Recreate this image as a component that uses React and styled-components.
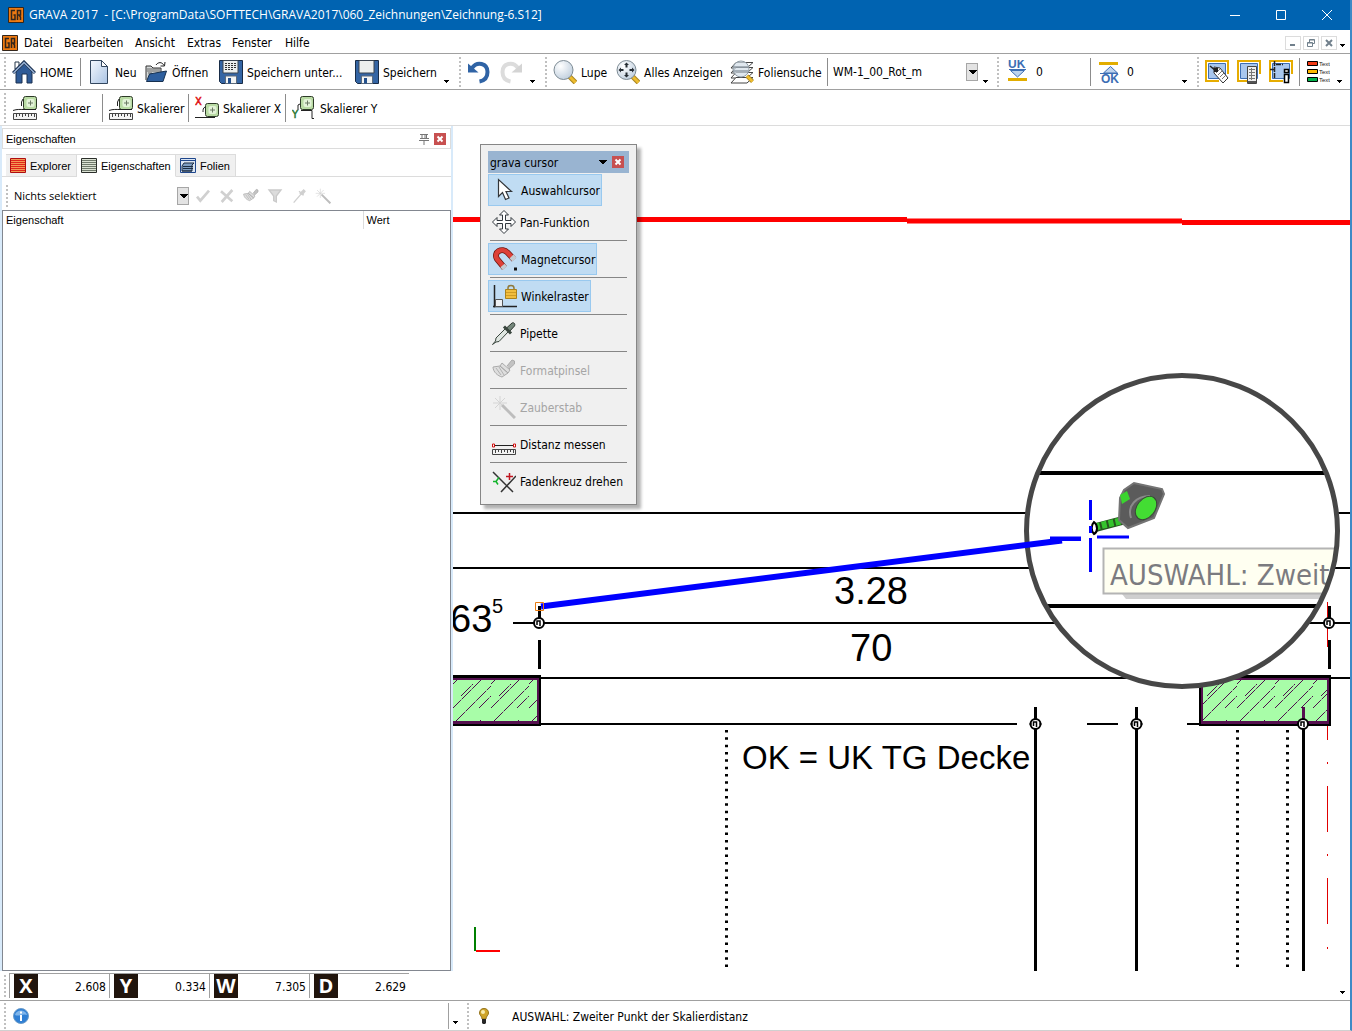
import React, { useState } from "react";
import styled, { createGlobalStyle, css } from "styled-components";

const GlobalStyle = createGlobalStyle`
  * {
    box-sizing: border-box;
  }
  html, body, #root {
    height: 100%;
  }
  body {
    margin: 0;
    background: #fff;
    color: #000;
    font-family: "DejaVu Sans Condensed", "DejaVu Sans", sans-serif;
    font-size: 12px;
    line-height: 16px;
  }
  button, input, select {
    margin: 0;
    padding: 0;
    border: none;
    border-radius: 0;
    background: none;
    color: inherit;
    font: inherit;
  }
  svg {
    display: block;
    flex: none;
  }
`;

const Shell = styled.div`
  display: flex;
  flex-direction: column;
  min-height: 100vh;
  border-right: 2px solid #3d8ac6;
  border-bottom: 1px solid #d0d0d0;
  overflow: hidden;
`;

const TitleBar = styled.header`
  display: flex;
  align-items: center;
  height: 30px;
  padding: 0 1px 0 8px;
  margin-right: -1px;
  background: #0063b1;
  color: #fff;
`;

const Title = styled.h1`
  flex: 1;
  margin: 0 0 0 5px;
  font-family: "Open Sans", "Noto Sans", sans-serif;
  font-size: 12px;
  font-weight: 400;
  white-space: pre;
`;

const CaptionButton = styled.button`
  display: flex;
  align-items: center;
  justify-content: center;
  width: 46px;
  height: 30px;
`;

const MenuBar = styled.nav`
  display: flex;
  align-items: center;
  height: 24px;
  padding: 2px 5px 0 2px;
  border-bottom: 1px solid #a0a0a0;
`;

const MenuItem = styled.button`
  width: ${(p) => p.$w}px;
  padding-left: 6px;
  text-align: left;
  white-space: nowrap;
`;

const MdiButtons = styled.div`
  display: flex;
  align-items: center;
  gap: 2px;
  margin-left: auto;
`;

const MdiButton = styled.button`
  display: flex;
  align-items: center;
  justify-content: center;
  width: 16px;
  height: 14px;
  border: 1px solid #dcdcdc;
`;

const ToolBar = styled.div`
  display: flex;
  align-items: center;
  height: 36px;
  padding-left: 4px;
  border-bottom: 1px solid ${(p) => p.$line || "#a0a0a0"};
`;

const Grip = styled.span`
  flex: none;
  width: 2px;
  height: ${(p) => p.$h || 30}px;
  margin-right: ${(p) => p.$gap || 6}px;
  background: repeating-linear-gradient(#c0c0c0 0 2px, transparent 2px 4px);
`;

const Separator = styled.span`
  flex: none;
  width: 1px;
  height: 28px;
  margin-right: ${(p) => p.$gap || 6}px;
  background: #8c8c8c;
`;

const Spacer = styled.span`
  flex: ${(p) => (p.$w ? `0 0 ${p.$w}px` : 1)};
`;

const ToolButton = styled.button`
  display: flex;
  flex: none;
  align-items: center;
  gap: ${(p) => p.$gap || 4}px;
  width: ${(p) => p.$w}px;
  height: 30px;
  white-space: nowrap;
`;

const Caption = styled.span`
  padding-top: 2px;
`;

const MoreButton = styled.button`
  display: flex;
  flex: none;
  align-items: flex-end;
  justify-content: center;
  width: ${(p) => p.$w || 10}px;
  height: ${(p) => p.$h || 24}px;
`;

const Combo = styled.label`
  display: flex;
  flex: none;
  align-items: center;
  width: ${(p) => p.$w}px;
`;

const Select = styled.select`
  flex: 1;
  min-width: 0;
  appearance: none;
  outline: none;
  font-family: ${(p) => p.$font || "inherit"};
`;

const ComboArrow = styled.span`
  display: flex;
  align-items: center;
  justify-content: center;
  width: 12px;
  height: 18px;
  border: 1px solid #a6a6a6;
  background: #e3e3e3;
`;

const NumberField = styled.label`
  display: flex;
  flex: none;
  align-items: center;
  gap: 8px;
  width: ${(p) => p.$w}px;
`;

const NumberInput = styled.input`
  width: 40px;
  outline: none;
`;

const Main = styled.main`
  display: flex;
  flex: 1;
  min-height: 0;
`;

const Dock = styled.aside`
  display: flex;
  flex: none;
  flex-direction: column;
  width: 453px;
  padding: 2px 0 0;
  border: solid #d8eafa;
  border-width: 0 2px;
  font-family: "Liberation Sans", Arial, sans-serif;
  font-size: 11px;
`;

const DockHeader = styled.div`
  display: flex;
  align-items: center;
  height: 21px;
  padding: 0 4px 0 3px;
  border: 1px solid #dcdcdc;
`;

const DockTitle = styled.h2`
  flex: 1;
  margin: 0;
  font-size: 11px;
  font-weight: 400;
`;

const CloseButton = styled.button`
  display: flex;
  align-items: center;
  justify-content: center;
  width: 12px;
  height: 12px;
  margin-left: ${(p) => p.$gap}px;
  background: #c75050;
`;

const Tabs = styled.div`
  display: flex;
  height: 23px;
  margin-top: 5px;
  padding-left: 4px;
  box-shadow: inset 0 -1px #dcdcdc;
`;

const Tab = styled.button`
  display: flex;
  align-items: center;
  gap: 4px;
  width: ${(p) => p.$w}px;
  padding-left: 4px;
  border: 1px solid #dcdcdc;
  border-left-width: 0;
  background: ${(p) => (p.$active ? "#fff" : "#f0f0f0")};
  ${(p) => p.$active && css`border-bottom-color: #fff;`}
`;

const SelectionBar = styled.div`
  display: flex;
  align-items: center;
  height: 33px;
  padding: 5px 0 0 4px;
`;

const TinyButton = styled.button`
  display: flex;
  justify-content: center;
  width: 24px;
  height: 16px;
`;

const PropertyBox = styled.div`
  flex: 1;
  border: 1px solid #828790;
`;

const PropertyTable = styled.table`
  width: 100%;
  border-collapse: collapse;
  table-layout: fixed;
  th {
    height: 18px;
    padding: 0 3px;
    font-weight: 400;
    text-align: left;
  }
  th + th {
    width: 87px;
    border-left: 1px solid #dcdcdc;
  }
`;

const Canvas = styled.section`
  position: relative;
  flex: 1;
  min-width: 0;
  overflow: hidden;
`;

// the sheet lies behind the floating palettes
const Sheet = styled.svg`
  position: absolute;
  inset: 0;
  width: 100%;
  height: 100%;
`;

const DimText = styled.text`
  font-family: "Liberation Sans", Arial, sans-serif;
  font-size: ${(p) => p.$size}px;
`;

const TipText = styled.text`
  font-size: 29px;
  fill: #7b7b80;
`;

const Palette = styled.div`
  position: absolute;
  top: 18px;
  left: 27px;
  width: 157px;
  padding: 6px 7px 5px;
  border: 1px solid #868686;
  background: #f0f0f0;
  box-shadow: 4px 4px 3px rgba(0, 0, 0, 0.3);
`;

const PaletteHeader = styled.div`
  display: flex;
  align-items: center;
  height: 22px;
  margin-bottom: 1px;
  padding: 0 5px 0 2px;
  background: #99b4d1;
`;

const PaletteTitle = styled.h2`
  flex: 1;
  margin: 0;
  padding-top: 2px;
  font-size: 12px;
  font-weight: 400;
`;

const PaletteGroup = styled.div`
  padding: 2px 0;
  border-bottom: 1px solid #868686;
  margin: 0 2px;
  &:first-of-type {
    padding-top: 0;
  }
  &:last-child {
    border-bottom: none;
  }
`;

const PaletteItem = styled.button`
  display: flex;
  align-items: center;
  gap: 4px;
  height: 32px;
  margin-left: -2px;
  padding: 0 1px 0 3px;
  border: 1px solid transparent;
  white-space: nowrap;
  &:disabled {
    color: #a5a5a5;
  }
  ${(p) =>
    p.$active &&
    css`
      padding-left: 4px;
      border-color: #99c9ef;
      background: #c0dcf3;
    `}
`;

const CoordBar = styled.div`
  display: flex;
  align-items: center;
  height: 30px;
  padding-left: 4px;
  border-bottom: 1px solid #a0a0a0;
`;

const Coord = styled.label`
  display: flex;
  align-items: center;
  width: 100px;
  height: 25px;
  padding: 0 3px 0 4px;
  border: solid #a0a0a0;
  border-width: 1px 0 0 1px;
`;

const CoordName = styled.span`
  width: 24px;
  height: 24px;
  background: #21150d;
  color: #fff;
  font-family: "Open Sans", sans-serif;
  font-size: 20px;
  font-weight: 700;
  line-height: 24px;
  text-align: center;
`;

const CoordInput = styled.input`
  flex: 1;
  min-width: 0;
  padding-top: 2px;
  outline: none;
  text-align: right;
`;

const StatusBar = styled.footer`
  display: flex;
  align-items: center;
  height: 29px;
  padding-left: 4px;
`;

const StatusField = styled.div`
  width: 439px;
  height: 26px;
  padding: 5px 3px;
  border-right: 1px solid #a0a0a0;
`;

const StatusText = styled.p`
  margin: 0 0 0 22px;
  padding-top: 2px;
`;

const Arrow = ({ size = 5 }) => (
  <svg width={size + 2} height={4} shapeRendering="crispEdges">
    <path d={size > 5 ? "M0 0h9L4.500 4.500z" : "M1 0h5v1h-1v1h-1v1h-1v-1h-1v-1h-1z"} />
  </svg>
);

const Icon = ({ children, w = 24, h = 24 }) => (
  <svg width={w} height={h} viewBox={`0 0 ${w} ${h}`} fill="none" aria-hidden="true">
    {children}
  </svg>
);

const LogoIcon = () => (
  <Icon w={16} h={16}>
    <path d="M.5.5h15v15H.5z" fill="#ee7a11" stroke="#33261c" />
    <path d="M7 3.500H3.500v9H7V8H5.500M9.500 13V3.500h3V8h-3M11 8l1.500 2v3" stroke="#33261c" strokeWidth="1.500" />
  </Icon>
);

const HomeIcon = () => (
  <Icon>
    <path d="M3 2h4v7H3z" fill="#fff" stroke="#26384a" />
    <path d="M4 12 12.500 4 20 12v11h-5v-9h-5v9H4z" fill="#2e5a96" stroke="#1b3050" />
    <path d="M1 13 12 2l11 11" stroke="#1b3050" strokeWidth="3" />
    <path d="M1.500 13 12 2.500l10.500 10.500" stroke="#9db8dc" strokeWidth="1.300" />
  </Icon>
);

const NewIcon = () => (
  <Icon>
    <defs>
      <linearGradient id="paper" x1="0" y1="0" x2="1" y2="1">
        <stop offset="0" stopColor="#f4f8fd" />
        <stop offset="1" stopColor="#a9c3e4" />
      </linearGradient>
    </defs>
    <path d="M3.500.5h11l6 6v17h-17z" fill="url(#paper)" stroke="#33475f" />
    <path d="M14.500.5v6h6z" fill="#fff" stroke="#33475f" />
  </Icon>
);

const OpenIcon = () => (
  <Icon>
    <path d="M2 20V6h5l2 2h8v5" fill="#d5d9d9" stroke="#333" />
    <path d="M3 9h13M3 11h13M4 13h4" stroke="#666" />
    <path d="M2.500 21.500 5.500 14l17-3-3.500 10.500z" fill="#2e5f9e" stroke="#16304f" />
    <path d="M12 5c2-3 6-3.500 8 .5M21 2l-.5 4h-4" stroke="#222" />
  </Icon>
);

const SaveIcon = ({ lines }) => (
  <Icon>
    <path d="M.5.5h23v23H2.500l-2-2z" fill="#3465a4" stroke="#182c47" />
    <path d="M4 .5h15V13H4z" fill="#ecefee" stroke="#3a4450" />
    {lines && <path d="M6 3.500h11M6 5.500h11M6 7.500h11M6 9.500h9" stroke="#333" strokeDasharray="2 1" />}
    <path d="M6.500 16h11v7.500h-11z" fill="#f2f4f4" stroke="#5c6b7c" />
    <path d="M9 18h3v5.500H9z" fill="#24508c" />
  </Icon>
);

const UndoIcon = ({ faded }) => (
  <Icon>
    <g transform={faded ? "translate(24 0) scale(-1 1)" : undefined}>
      <path d="M5 8C10 1 20.500 3 20.500 12c0 5-2.500 8.500-8 9.500" stroke={faded ? "#dcdcdc" : "#2f63a5"} strokeWidth="4" />
      <path d="M1 3.500v9h10.500z" fill={faded ? "#d4d4d4" : "#2f63a5"} />
    </g>
  </Icon>
);

const LensIcon = ({ arrows }) => (
  <Icon>
    <defs>
      <radialGradient id="lens" cx=".35" cy=".3" r=".8">
        <stop offset="0" stopColor="#fff" />
        <stop offset="1" stopColor="#bcccdc" />
      </radialGradient>
    </defs>
    <path d="m16 16 6.500 6.500" stroke="#a88420" strokeWidth="5" />
    <path d="m16 16 6.500 6.500" stroke="#edbc2f" strokeWidth="3" />
    <circle cx="10.500" cy="10" r="9.500" fill="url(#lens)" stroke="#7d8b94" />
    {arrows && (
      <path
        d="M10.500 2.500 8 5h5zM10.500 17.500 8 15h5zM2.500 10 5 7.500v5zM18.500 10 16 7.500v5zM9.500 5h2v2.500h-2zM9.500 12.500h2V15h-2zM5 9h2.500v2H5zM13.500 9H16v2h-2.500z"
        fill="#252c33"
      />
    )}
  </Icon>
);

const LayerSearchIcon = () => (
  <Icon>
    {[0, 5, 10, 15].map((y) => (
      <path key={y} d={`M6 ${y + 2.500}h17l-6 5.500H1z`} fill="#fff" stroke="#444" />
    ))}
    <circle cx="11" cy="9" r="8" fill="#d3dee8" fillOpacity=".7" stroke="#8e9aa3" />
    <path d="M4 7h14M4 11h14" stroke="#6b7681" />
    <path d="m17 16 5.500 5.500" stroke="#a88420" strokeWidth="4" />
    <path d="m17 16 5.500 5.500" stroke="#edbc2f" strokeWidth="2.500" />
  </Icon>
);

const LevelText = styled.text`
  font: 700 12px "Liberation Sans", sans-serif;
  fill: #3d6eb4;
`;

const LowerEdgeIcon = () => (
  <Icon w={20} h={24}>
    <LevelText x="0" y="8">UK</LevelText>
    <path d="M1 9.500h17M2.500 10.500l7 6.500 7-6.500z" fill="#bdd3ee" stroke="#3d6eb4" />
    <path d="M0 18h19v3H0z" fill="#e2ad00" />
  </Icon>
);

const UpperEdgeIcon = () => (
  <Icon w={20} h={24}>
    <path d="M0 2h19v3H0z" fill="#e2ad00" />
    <path d="M1 13.500h18M4.500 13l7-6.500 7 6.500z" fill="#bdd3ee" stroke="#3d6eb4" />
    <LevelText x="2" y="23">OK</LevelText>
  </Icon>
);

const Frame = () => (
  <>
    <path d="M14 21H1V1h22v13" stroke="#e6ac00" strokeWidth="2" />
    <path d="M3.500 3.500h17v15h-17z" fill="#a9c7ee" stroke="#3d6eb4" />
  </>
);

const LabelIcon = () => (
  <Icon>
    <Frame />
    <path d="m9 7 6 1 8 10-5 5-9-10z" fill="#fff" stroke="#333" />
    <path d="m11 13 4-4m-2 6 4-4m-2 6 4-4m-2 6 4-4" stroke="#777" />
    <path d="m5 6 6 5" stroke="#222" strokeWidth="1.500" />
    <path d="M9 8h4v4H9z" fill="#222" />
  </Icon>
);

const ListIcon = () => (
  <Icon>
    <Frame />
    <path d="M10.500 6.500h9v17h-9z" fill="#eee" stroke="#444" />
    <path d="M12 9.500h6M12 12.500h6M12 15.500h6M12 18.500h6M14.500 8v12" stroke="#777" />
    <path d="M11 21h8v2h-8z" fill="#555" />
  </Icon>
);

const InfoFrameIcon = () => (
  <Icon>
    <Frame />
    <path d="M5.500 1v18M1 9.500h6M7 4.500h7" stroke="#222" strokeWidth="1.500" strokeDasharray="5 1" />
    <path d="M15.500 9.500h4v3h-4zM15.500 14.500h4v8h-4z" fill="#fff" stroke="#000" strokeWidth="1.500" />
  </Icon>
);

const LegendText = styled.text`
  font: 6px "Liberation Sans", sans-serif;
  fill: #222;
`;

const LegendIcon = () => (
  <Icon>
    {["#f23a14", "#ffb800", "#00b14a"].map((c, i) => (
      <g key={c}>
        <path d={`M1.500 ${i * 8 + 1.500}h10v4h-10z`} fill={c} stroke="#000" />
        <LegendText x="13" y={i * 8 + 6}>Text</LegendText>
      </g>
    ))}
  </Icon>
);

const Tape = () => (
  <>
    <rect x=".500" y=".500" width="13" height="13" rx="2" fill="#b9dba4" stroke="#2d3a28" />
    <rect x="3.500" y="3" width="8" height="8" rx="2" fill="#e3f3d8" />
    <path d="M7.500 4.500v5M5 7h5" stroke="#6d7b66" />
  </>
);

const Ruler = () => (
  <>
    <path d="M.5 17.500h23v6H.5z" fill="#f3f3f3" stroke="#444" />
    <path d="M3.500 18v3M6.500 18v2M9.500 18v3M12.500 18v2M15.500 18v3M18.500 18v2M21.500 18v3" stroke="#444" />
  </>
);

const ScaleIcon = () => (
  <Icon>
    <g transform="translate(10 0)"><Tape /></g>
    <path d="M10 3 8.500 6v4M0 14.500c4-1.500 8-1 10-1h13" stroke="#222" />
    <Ruler />
  </Icon>
);

const AxisText = styled.text`
  font: 11px "DejaVu Sans Condensed", sans-serif;
  fill: ${(p) => p.$color};
  stroke: ${(p) => p.$color};
  stroke-width: 0.5px;
`;

const ScaleXIcon = () => (
  <Icon>
    <AxisText $color="#e01515" x="0" y="9">X</AxisText>
    <g transform="translate(10 7)"><Tape /></g>
    <path d="M0 21.500h20M10 11c-2 1-2 3-2 5" stroke="#222" />
  </Icon>
);

const ScaleYIcon = () => (
  <Icon>
    <AxisText $color="#2c7a35" x="0" y="22">Y</AxisText>
    <g transform="translate(8 0)"><Tape /></g>
    <path d="M8 8 6 9v5M9 14.500h11v8h2" stroke="#222" />
  </Icon>
);

const PinIcon = () => (
  <Icon w={12} h={12}>
    <path d="M2 1.500h8M4 1.500v4M8.500 1.500v4M7 2v4M2 5.500h9M1 7.500h10M6 8v4" stroke="#777" />
  </Icon>
);

const CrossIcon = () => (
  <Icon w={12} h={12}>
    <path d="m3.500 3.500 5 5m0-5-5 5" stroke="#fff" strokeWidth="2" />
  </Icon>
);

const SheetIcon = ({ edge, fill, stripe }) => (
  <Icon w={16} h={16}>
    <path d="M.5.5h15v14H.5z" fill={fill} stroke={edge} />
    <path d="M1 2.500h14M1 4.500h14M1 6.500h14M1 8.500h14M1 10.500h14M1 12.500h14" stroke={stripe} />
  </Icon>
);

const LayersIcon = () => (
  <Icon w={16} h={16}>
    <path d="M.5.5h15v14H.5z" fill="#dbe6f4" stroke="#1f478c" />
    <path d="M1 2.500h14" stroke="#1f478c" />
    <path d="M4 5h10l-2 2v6H2V8z" fill="#7f9fc4" stroke="#1c2d42" />
    <path d="M3 8.500h10M3 10.500h10M2 13h10" stroke="#1c2d42" />
  </Icon>
);

const BrushShape = () => (
  <>
    <path d="m15 8 5-6 2.500 1v3L17 11" fill="#c2c2c2" stroke="#aaa" />
    <path d="m10 5 8 7-2 3-8-7zM8 8 1 9c0 5 5 9 9 10l6-4z" fill="#dedede" stroke="#aaa" />
    <path d="m4 10 5 7m-2-8 5 8" stroke="#b2b2b2" />
  </>
);

const WandShape = () => (
  <>
    <path d="M8 1v14M1 8h14M3 3l10 10M13 3 3 13" stroke="#d4d4d4" />
    <path d="m10 10 13 13" stroke="#bdbdbd" strokeWidth="3" />
  </>
);

const PipetteShape = () => (
  <>
    <path d="M13 8 4 17l-.5 3-3 3.500L4 21l3-.5L16 11" fill="#dfe6e1" stroke="#39453d" />
    <path d="M14 7.500 20 2c2-1 3.500 1 2.500 3L17 11" fill="#75877b" stroke="#2b352e" />
    <path d="m12 5.500 7 7" stroke="#39453d" strokeWidth="3" />
  </>
);

const SmallIcon = ({ children }) => (
  <svg width="16" height="16" viewBox="0 0 24 24" fill="none" aria-hidden="true">
    {children}
  </svg>
);

const MagnetIcon = () => (
  <Icon>
    <path d="M21 12.500 14.500 5.500C9 0 0 5 4 12l7.500 9" stroke="#6e1812" strokeWidth="6" />
    <path d="M21 12.500 14.500 5.500C9 0 0 5 4 12l7.500 9" stroke="#dd4038" strokeWidth="4.500" />
    <path d="m18.500 9.500 3 3.200M9.500 18.500l2.300 2.800" stroke="#c3cbd1" strokeWidth="5.500" />
    <path d="M21 20.500h3v3h-3z" fill="#111" />
  </Icon>
);

const AngleIcon = () => (
  <Icon>
    <path d="M1.500 1v22.500M0 22.500h24" stroke="#222" strokeWidth="1.500" />
    <path d="M2.500 15.500h7v7h-7z" fill="#eef1f4" stroke="#555" />
    <path d="M15 7V4c0-3.500 6-3.500 6 0v3" stroke="#8f7a3d" strokeWidth="1.500" />
    <path d="M12.500 5.500h11v9h-11z" fill="#f0bd3e" stroke="#a9811c" />
    <path d="M13 8.500h10M13 11.500h10" stroke="#cf9c25" />
  </Icon>
);

const PointerIcon = () => (
  <Icon>
    <path d="M5.500 1.500v17l4-4 3 7 3.500-1.500-3-6.500h5.500z" fill="#fff" stroke="#33363a" strokeWidth="1.200" />
  </Icon>
);

const PanIcon = () => (
  <Icon>
    <path
      d="m12 .5 4.500 4.500h-3v5.500H19v-3l4.500 4.500-4.500 4.500v-3h-5.500V19h3L12 23.500 7.500 19h3v-5.500H5v3L.5 12 5 7.500v3h5.500V5h-3z"
      fill="#fff"
      stroke="#32383f"
    />
  </Icon>
);

const DistanceIcon = () => (
  <Icon>
    <path d="M2 13.500h20" stroke="#222" />
    <path d="M.5 12h2v3h-2zM21.500 12h2v3h-2z" fill="#fff" stroke="#d01010" />
    <path d="M.5 17.500h23v5H.5z" fill="#f3f3f3" stroke="#444" />
    <path d="M3.500 18v3M6.500 18v2M9.500 18v3M12.500 18v2M15.500 18v3M18.500 18v2M21.500 18v3" stroke="#444" />
  </Icon>
);

const CrosshairIcon = () => (
  <Icon>
    <path d="m1 3 20 20M24 7 9 23" stroke="#333" strokeWidth="1.500" />
    <path d="M17.500 4v7M14 7.500h7" stroke="#c01520" strokeWidth="1.500" />
    <path d="M1 12.500h3l3-4M4 12.500l2 3" stroke="#13b42c" strokeWidth="1.500" />
  </Icon>
);

const InfoIcon = () => (
  <Icon w={16} h={16}>
    <circle cx="8" cy="8" r="7.500" fill="#2f7fd4" stroke="#6c9cc9" />
    <path d="M2 7c1-6 11-6 12 0-4-2-8 2-12 0z" fill="#7fb5ea" />
    <path d="M7 3.500h2v2H7zM7 7h2v6H7z" fill="#fff" />
  </Icon>
);

const BulbIcon = () => (
  <Icon w={12} h={18}>
    <path d="M6 1.500C3 1.500 1.500 3.500 1.500 6S4 9 4 12h4c0-3 2.500-3.500 2.500-6S9 1.500 6 1.500z" fill="#cfa52b" stroke="#94731a" />
    <circle cx="5" cy="5" r="2" fill="#f8ecb0" />
    <path d="M4 12h4v4l-1 1H5l-1-1z" fill="#262626" />
  </Icon>
);

const paletteGroups = [
  [
    { label: "Auswahlcursor", icon: <PointerIcon />, active: true },
    { label: "Pan-Funktion", icon: <PanIcon /> },
  ],
  [{ label: "Magnetcursor", icon: <MagnetIcon />, active: true }],
  [{ label: "Winkelraster", icon: <AngleIcon />, active: true }],
  [{ label: "Pipette", icon: <Icon><PipetteShape /></Icon> }],
  [{ label: "Formatpinsel", icon: <Icon><BrushShape /></Icon>, disabled: true }],
  [{ label: "Zauberstab", icon: <Icon><WandShape /></Icon>, disabled: true }],
  [{ label: "Distanz messen", icon: <DistanceIcon /> }],
  [{ label: "Fadenkreuz drehen", icon: <CrosshairIcon /> }],
];

const coords = [
  ["X", "2.608"],
  ["Y", "0.334"],
  ["W", "7.305"],
  ["D", "2.629"],
];

const Node = ({ x, y }) => (
  <g>
    <circle cx={x} cy={y} r="5" fill="#fff" stroke="#000" strokeWidth="2" />
    <path d={`M${x - 2} ${y + 2}v-4h3v5M${x - 6} ${y}h2M${x + 4} ${y}h2`} stroke="#000" strokeWidth="1.500" fill="none" />
  </g>
);

const Wall = ({ x, width, id, open }) => (
  <g>
    <defs>
      <pattern id={id} width="38" height="40" patternUnits="userSpaceOnUse" x={x} y="680">
        <path
          d="M-2 30 28 0M2 42 38 6M8 16 20 4M26 28l12-12M-12 16 4 0"
          stroke="#4d0a4d"
          strokeDasharray="14 1"
          fill="none"
        />
      </pattern>
    </defs>
    <path d={`M${x} 675h${width}v51h-${width}z`} fill="#000" />
    <path d={`M${open ? x : x + 2} 678h${open ? width - 2 : width - 4}v46h-${open ? width - 2 : width - 4}z`} fill="#55104f" />
    <path d={`M${open ? x : x + 4} 680h${open ? width - 4 : width - 8}v41h-${open ? width - 4 : width - 8}z`} fill="#a8fda8" />
    <path d={`M${open ? x : x + 4} 680h${open ? width - 4 : width - 8}v41h-${open ? width - 4 : width - 8}z`} fill={`url(#${id})`} />
  </g>
);

// sheet coordinates start at 453,126
const Drawing = () => (
  <Sheet role="img" aria-label="Zeichnung-6.S12" fill="none">
    <defs>
      <clipPath id="loupe">
        <circle cx="1182" cy="531" r="155" />
      </clipPath>
    </defs>
    <g transform="translate(-453 -126)">
      <path d="M453 219.500h454M907 221h275M1182 222.500h400" stroke="#f00" strokeWidth="5" />
      <path d="M453 513h1200M453 568h1200M513 623h1100M541 678h1100M541 724h476M1087 724h31M1187 724h16" stroke="#000" strokeWidth="2" />
      <DimText x="450" y="632" $size={38} fill="#000">63</DimText>
      <DimText x="492" y="613" $size={20} fill="#000">5</DimText>
      <DimText x="834" y="604" $size={38} fill="#000">3.28</DimText>
      <DimText x="850" y="661" $size={38} fill="#000">70</DimText>
      <DimText x="742" y="769" $size={33} fill="#000">OK = UK TG Decke</DimText>

      <Wall id="hatchLeft" x={453} width={88} open />
      <Wall id="hatchRight" x={1199} width={132} />

      <path d="M539.500 606v12M539.500 640v29M1329.500 606v12M1329.500 640v29" stroke="#000" strokeWidth="3" />
      <path d="M1035.500 707v264M1136.500 707v264M1303.500 724v247" stroke="#000" strokeWidth="3" />
      <path d="M1303.500 707v17" stroke="#55104f" strokeWidth="3" />
      <path d="M726.500 730v240M1237.500 730v240M1287.500 730v240" stroke="#000" strokeWidth="3" strokeDasharray="2.500 4.830" />
      <path d="M1327.500 602v45M1327.500 726v14M1327.500 762v2M1327.500 786v46M1327.500 854v2M1327.500 878v46M1327.500 947v2" stroke="#e00000" />
      <Node x={539} y={623} />
      <Node x={1329} y={623} />
      <Node x={1035.5} y={724} />
      <Node x={1136.5} y={724} />
      <Node x={1303} y={724} />
      <path d="M475 927v24" stroke="#008000" strokeWidth="2" />
      <path d="M476 951h24" stroke="#f00" strokeWidth="2" />

      <circle cx="1182" cy="531" r="155" fill="#fff" />
      <g clipPath="url(#loupe)">
        <path d="M1020 473h330M1020 606h330" stroke="#000" strokeWidth="4" />
        <path d="M1122 594h230v5h-226z" fill="#cfcfcf" />
        <path d="M1103.500 548.500h250v45h-250z" fill="#fffff1" stroke="#b4b4b4" strokeWidth="2" />
        <TipText x="1110" y="585">AUSWAHL: Zweite</TipText>
        <path d="m1094 528 34-9" stroke="#27551f" strokeWidth="9" />
        <path d="m1095 527 30-7" stroke="#35c42d" strokeWidth="7" strokeDasharray="5 2" />
        <path d="m1120 498 4-8 10-7 28 6 2 5-10 24-26 10-9-8z" fill="#5b5b5b" stroke="#747474" strokeWidth="2" />
        <path d="m1120 495 7-4 3 8-8 5z" fill="#3bd52f" />
        <path d="M1131 518c-4-12 5-22 19-22" stroke="#8a8a8a" strokeWidth="2" />
        <ellipse cx="1146" cy="508" rx="9" ry="13" transform="rotate(38 1146 508)" fill="#43dd33" stroke="#3a4a38" />
        <path d="M1094 522c-3 3-3 9 0 12 4-2 4-9 0-12z" fill="#fff" stroke="#000" strokeWidth="2" />
      </g>
      <circle cx="1182" cy="531" r="155.500" stroke="#474747" strokeWidth="5" />
      <path d="m541 606.500 521-66" stroke="#00f" strokeWidth="6" />
      <path d="M535.500 602.500h8v8h-8z" stroke="#e87a10" />
      <path d="M1050 538h31M1097 537h32M1090.500 500v20M1090.500 526v7M1090.500 538v34" stroke="#00f" strokeWidth="3" />
      <path d="M1060 539h21" stroke="#00f" strokeWidth="4" />
    </g>
  </Sheet>
);

const App = () => {
  const [layer, setLayer] = useState("WM-1_00_Rot_m");
  const [tab, setTab] = useState("Eigenschaften");

  return (
    <>
      <GlobalStyle />
      <Shell>
        <TitleBar>
          <LogoIcon />
          <Title>{"GRAVA 2017  - [C:\\ProgramData\\SOFTTECH\\GRAVA2017\\060_Zeichnungen\\Zeichnung-6.S12]"}</Title>
          <CaptionButton aria-label="Minimieren">
            <Icon w={12} h={12}><path d="M1 6.500h10" stroke="#fff" /></Icon>
          </CaptionButton>
          <CaptionButton aria-label="Maximieren">
            <Icon w={12} h={12}><path d="M1.500 1.500h9v9h-9z" stroke="#fff" /></Icon>
          </CaptionButton>
          <CaptionButton aria-label="Schließen">
            <Icon w={12} h={12}><path d="m1 1 10 10m0-10L1 11" stroke="#fff" /></Icon>
          </CaptionButton>
        </TitleBar>

        <MenuBar>
          <LogoIcon />
          <MenuItem $w={40}>Datei</MenuItem>
          <MenuItem $w={71}>Bearbeiten</MenuItem>
          <MenuItem $w={52}>Ansicht</MenuItem>
          <MenuItem $w={45}>Extras</MenuItem>
          <MenuItem $w={53}>Fenster</MenuItem>
          <MenuItem $w={40}>Hilfe</MenuItem>
          <MdiButtons>
            <MdiButton aria-label="Fenster minimieren">
              <Icon w={8} h={8}><path d="M1 6h5" stroke="#71808c" strokeWidth="2" /></Icon>
            </MdiButton>
            <MdiButton aria-label="Fenster wiederherstellen">
              <Icon w={8} h={8}><path d="M2.500 3V.5h5v4H6M.5 3.500h5v4h-5zM.5 4h5M2.500 1h5" stroke="#71808c" /></Icon>
            </MdiButton>
            <MdiButton aria-label="Fenster schließen">
              <Icon w={8} h={8}><path d="m1 1 6 6m0-6L1 7" stroke="#71808c" strokeWidth="2" /></Icon>
            </MdiButton>
            <MoreButton $w={6} $h={10} aria-label="Mehr"><Arrow /></MoreButton>
          </MdiButtons>
        </MenuBar>

        <ToolBar>
          <Grip />
          <ToolButton $w={68}><HomeIcon /><Caption>HOME</Caption></ToolButton>
          <Separator />
          <ToolButton $w={57}><NewIcon /><Caption>Neu</Caption></ToolButton>
          <ToolButton $w={75}><OpenIcon /><Caption>Öffnen</Caption></ToolButton>
          <ToolButton $w={136}><SaveIcon lines /><Caption>Speichern unter...</Caption></ToolButton>
          <ToolButton $w={86}><SaveIcon /><Caption>Speichern</Caption></ToolButton>
          <MoreButton aria-label="Mehr"><Arrow /></MoreButton>
          <Spacer $w={8} />
          <Grip />
          <ToolButton $w={32} aria-label="Rückgängig"><UndoIcon /></ToolButton>
          <ToolButton $w={28} aria-label="Wiederholen"><UndoIcon faded /></ToolButton>
          <MoreButton aria-label="Mehr"><Arrow /></MoreButton>
          <Spacer $w={8} />
          <Grip />
          <ToolButton $w={63}><LensIcon /><Caption>Lupe</Caption></ToolButton>
          <ToolButton $w={114}><LensIcon arrows /><Caption>Alles Anzeigen</Caption></ToolButton>
          <ToolButton $w={97}><LayerSearchIcon /><Caption>Foliensuche</Caption></ToolButton>
          <Separator $gap={5} />
          <Combo $w={145}>
            <Select aria-label="Folie" value={layer} onChange={(e) => setLayer(e.target.value)}>
              <option>WM-1_00_Rot_m</option>
            </Select>
            <ComboArrow><Arrow size={7} /></ComboArrow>
          </Combo>
          <Spacer $w={2} />
          <MoreButton aria-label="Mehr"><Arrow /></MoreButton>
          <Spacer $w={7} />
          <Grip $gap={9} />
          <NumberField $w={82}>
            <LowerEdgeIcon />
            <NumberInput aria-label="Unterkante" defaultValue="0" />
          </NumberField>
          <Separator $gap={8} />
          <NumberField $w={80}>
            <UpperEdgeIcon />
            <NumberInput aria-label="Oberkante" defaultValue="0" />
          </NumberField>
          <MoreButton aria-label="Mehr"><Arrow /></MoreButton>
          <Spacer $w={8} />
          <Grip />
          <ToolButton $w={32} aria-label="Etikett"><LabelIcon /></ToolButton>
          <ToolButton $w={32} aria-label="Liste"><ListIcon /></ToolButton>
          <ToolButton $w={30} aria-label="Info"><InfoFrameIcon /></ToolButton>
          <Separator />
          <ToolButton $w={28} aria-label="Legende"><LegendIcon /></ToolButton>
          <MoreButton aria-label="Mehr"><Arrow /></MoreButton>
        </ToolBar>

        <ToolBar $line="#dcdcdc">
          <Grip $gap={7} />
          <ToolButton $w={89} $gap={6}><ScaleIcon /><Caption>Skalierer</Caption></ToolButton>
          <Separator />
          <ToolButton $w={79}><ScaleIcon /><Caption>Skalierer</Caption></ToolButton>
          <Separator />
          <ToolButton $w={90}><ScaleXIcon /><Caption>Skalierer X</Caption></ToolButton>
          <Separator />
          <ToolButton $w={90}><ScaleYIcon /><Caption>Skalierer Y</Caption></ToolButton>
        </ToolBar>

        <Main>
          <Dock>
            <DockHeader>
              <DockTitle>Eigenschaften</DockTitle>
              <button aria-label="Anheften"><PinIcon /></button>
              <CloseButton $gap={4} aria-label="Schließen"><CrossIcon /></CloseButton>
            </DockHeader>
            <Tabs role="tablist">
              <Tab role="tab" $w={71} $active={tab === "Explorer"} onClick={() => setTab("Explorer")}>
                <SheetIcon edge="#b00d10" fill="#f39a55" stripe="#e0251c" />
                Explorer
              </Tab>
              <Tab role="tab" $w={99} $active={tab === "Eigenschaften"} onClick={() => setTab("Eigenschaften")}>
                <SheetIcon edge="#2b2f2b" fill="#dbe2d4" stripe="#707a6c" />
                Eigenschaften
              </Tab>
              <Tab role="tab" $w={60} $active={tab === "Folien"} onClick={() => setTab("Folien")}>
                <LayersIcon />
                Folien
              </Tab>
            </Tabs>
            <SelectionBar>
              <Grip $h={22} />
              <Combo $w={175}>
                <Select aria-label="Auswahl" $font={'"Open Sans", sans-serif'}>
                  <option>Nichts selektiert</option>
                </Select>
                <ComboArrow><Arrow size={7} /></ComboArrow>
              </Combo>
              <Spacer $w={2} />
              <TinyButton disabled aria-label="Übernehmen">
                <SmallIcon><path d="m3 13 5 6L21 4" stroke="#d0d0d0" strokeWidth="4" /></SmallIcon>
              </TinyButton>
              <TinyButton disabled aria-label="Verwerfen">
                <SmallIcon><path d="m3 5 17 15M20 3 4 21" stroke="#d0d0d0" strokeWidth="4" /></SmallIcon>
              </TinyButton>
              <TinyButton disabled aria-label="Pinsel"><SmallIcon><BrushShape /></SmallIcon></TinyButton>
              <TinyButton disabled aria-label="Filter">
                <SmallIcon><path d="M3 3h18l-7 9v9l-4-2v-7z" fill="#dcdcdc" stroke="#cacaca" strokeWidth="2" /></SmallIcon>
              </TinyButton>
              <TinyButton disabled aria-label="Pipette">
                <SmallIcon>
                  <path d="M4 22 17 7M12 5l7 6" stroke="#d0d0d0" strokeWidth="2" />
                  <path d="m14 8 5-5 2 2-4 5z" fill="#d0d0d0" stroke="#d0d0d0" strokeWidth="2" />
                </SmallIcon>
              </TinyButton>
              <TinyButton disabled aria-label="Zauberstab"><SmallIcon><WandShape /></SmallIcon></TinyButton>
            </SelectionBar>
            <PropertyBox>
              <PropertyTable>
                <thead>
                  <tr>
                    <th scope="col">Eigenschaft</th>
                    <th scope="col">Wert</th>
                  </tr>
                </thead>
                <tbody />
              </PropertyTable>
            </PropertyBox>
          </Dock>

          <Canvas>
            <Drawing />
            <Palette>
              <PaletteHeader>
                <PaletteTitle>grava cursor</PaletteTitle>
                <button aria-label="Optionen"><Arrow size={7} /></button>
                <CloseButton $gap={5} aria-label="Schließen"><CrossIcon /></CloseButton>
              </PaletteHeader>
              <div>
                {paletteGroups.map((group) => (
                  <PaletteGroup key={group[0].label}>
                    {group.map((item) => (
                      <PaletteItem key={item.label} $active={item.active} disabled={item.disabled}>
                        {item.icon}
                        <Caption>{item.label}</Caption>
                      </PaletteItem>
                    ))}
                  </PaletteGroup>
                ))}
              </div>
            </Palette>
          </Canvas>
        </Main>

        <CoordBar>
          <Grip $h={22} $gap={3} />
          {coords.map(([name, value]) => (
            <Coord key={name}>
              <CoordName>{name}</CoordName>
              <CoordInput defaultValue={value} />
            </Coord>
          ))}
          <Spacer />
          <MoreButton $w={15} $h={18} aria-label="Mehr"><Arrow /></MoreButton>
        </CoordBar>

        <StatusBar>
          <Grip $h={26} $gap={4} />
          <StatusField><InfoIcon /></StatusField>
          <MoreButton $w={13} $h={18} aria-label="Mehr"><Arrow /></MoreButton>
          <Spacer $w={5} />
          <Grip $h={26} $gap={9} />
          <BulbIcon />
          <StatusText>AUSWAHL: Zweiter Punkt der Skalierdistanz</StatusText>
        </StatusBar>
      </Shell>
    </>
  );
};

export default App;
